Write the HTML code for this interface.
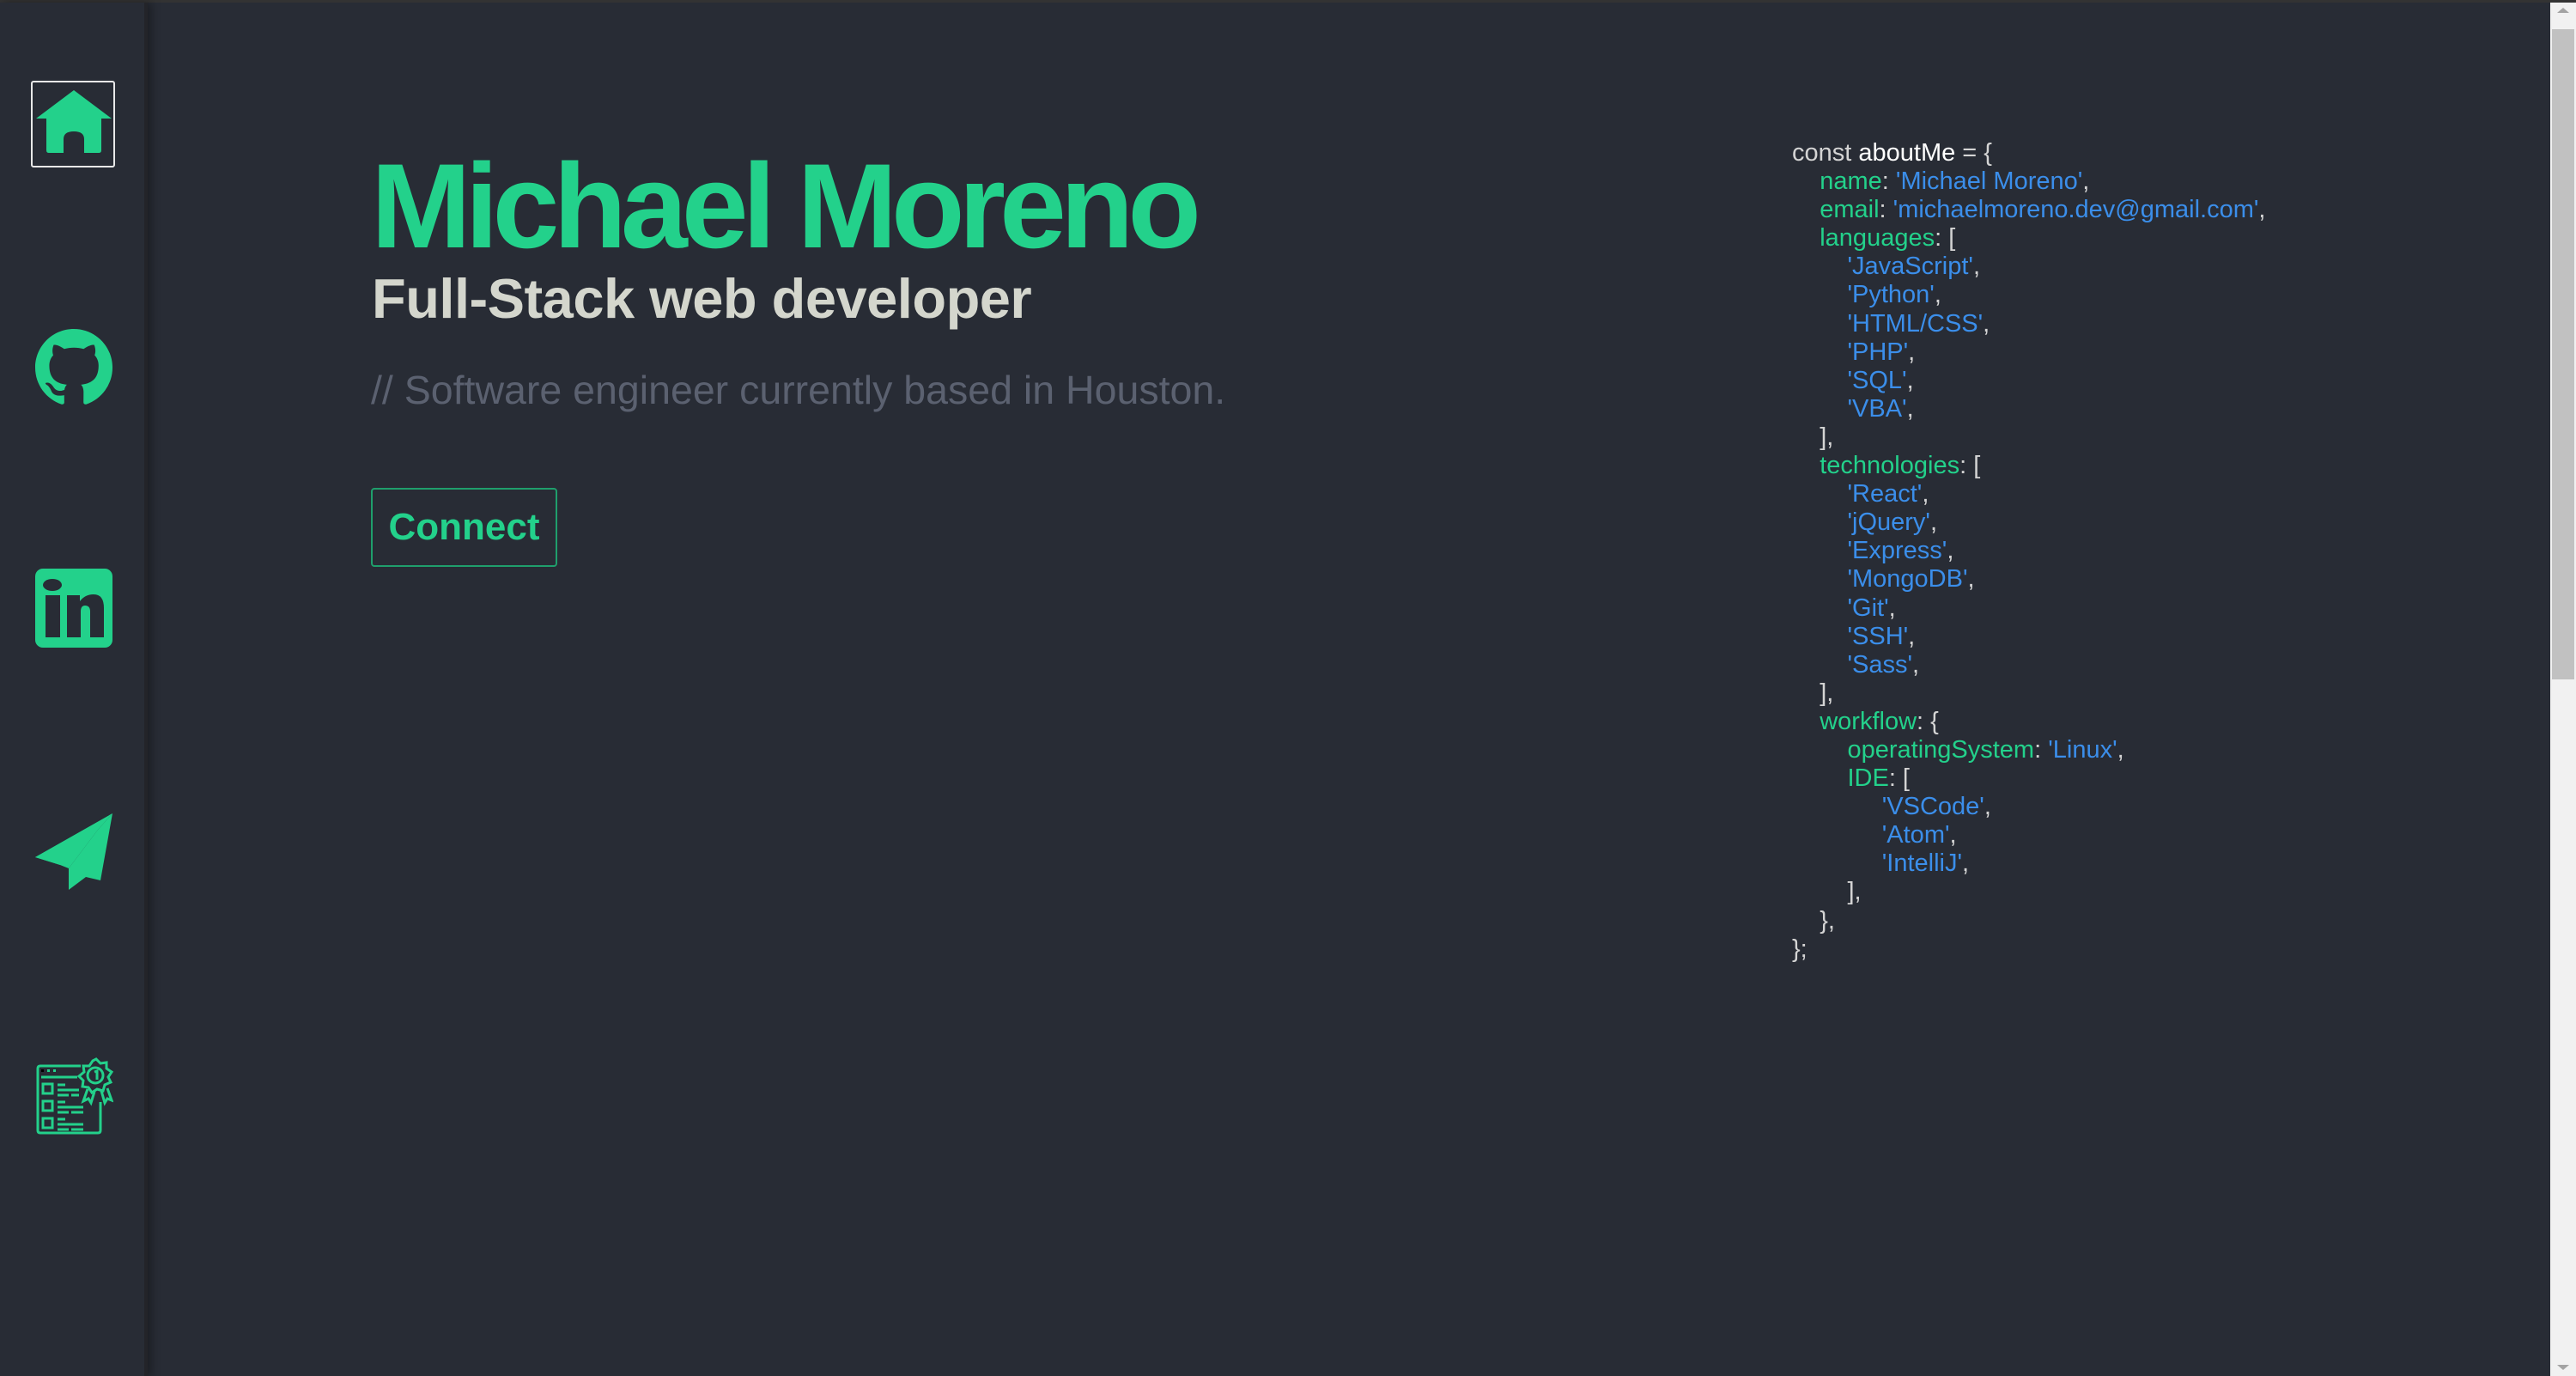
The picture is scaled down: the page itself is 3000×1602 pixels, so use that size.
<!DOCTYPE html>
<html><head><meta charset="utf-8"><style>
*{margin:0;padding:0;box-sizing:border-box}
html,body{width:3000px;height:1602px;overflow:hidden;background:#282c35;font-family:"Liberation Sans",sans-serif}
.top{position:absolute;left:0;top:0;width:3000px;height:3px;background:#333}
.side{position:absolute;left:0;top:3px;width:172px;height:1599px;background:#282c35;box-shadow:4px 0 10px rgba(0,0,0,.35);border-right:4px solid #232429}
.ic{position:absolute}
.home{left:36px;top:94px;width:98px;height:101px;border:2px solid #e8e8e8;border-radius:3px}
h1{position:absolute;left:432px;top:170px;font-size:140px;font-weight:bold;color:#23d18b;letter-spacing:-7px;line-height:140px;white-space:nowrap}
h2{position:absolute;left:433px;top:313px;font-size:65px;font-weight:bold;color:#d4d6cd;line-height:70px;white-space:nowrap;letter-spacing:-.5px}
.cm{position:absolute;left:432px;top:426px;font-size:46.5px;color:#5b6170;line-height:56px;white-space:nowrap}
.btn{position:absolute;left:432px;top:568px;width:217px;height:92px;border:2px solid #1f9f6c;border-radius:4px;color:#23d18b;font-weight:bold;font-size:44px;line-height:88px;text-align:center}
pre{position:absolute;left:2087px;top:162px;font-family:"Liberation Sans",sans-serif;font-size:29px;line-height:33.1px;color:#d4d4d4}
.k{color:#23d18b}.s{color:#3b8eea}.w{color:#fff}
.sb{position:absolute;left:2970px;top:3px;width:30px;height:1599px;background:#f1f1f1}
.th{position:absolute;left:2972px;top:34px;width:26px;height:757px;background:#c1c1c1}
</style></head><body>
<div class="top"></div>
<div class="side"></div>
<div class="ic home"></div>
<svg class="ic" style="left:42px;top:105px" width="88" height="73" viewBox="0 0 88 73"><path d="M0 33 L44 0 L88 33 L76 33 L76 70 Q76 73 73 73 L56 73 L56 57 Q56 48 44 48 Q32 48 32 57 L32 73 L15 73 Q12 73 12 70 L12 33 Z" fill="#23d18b"/></svg>
<svg class="ic" style="left:41px;top:381px" width="90" height="94" viewBox="0 0 16 16"><path fill="#23d18b" d="M8 0C3.58 0 0 3.58 0 8c0 3.54 2.290 6.530 5.470 7.590.4.07.55-.17.55-.38 0-.19-.01-.82-.01-1.49-2.01.37-2.53-.49-2.69-.94-.09-.23-.48-.94-.82-1.130-.28-.15-.68-.52-.01-.53.63-.01 1.080.58 1.230.82.72 1.210 1.870.87 2.330.66.07-.52.28-.87.51-1.07-1.78-.2-3.64-.89-3.64-3.95 0-.87.31-1.59.82-2.15-.08-.2-.36-1.02.08-2.12 0 0 .67-.21 2.2.82.64-.18 1.32-.27 2-.27.68 0 1.36.09 2 .27 1.53-1.04 2.2-.82 2.2-.82.44 1.1.16 1.92.08 2.12.51.56.82 1.27.82 2.15 0 3.07-1.87 3.75-3.65 3.95.29.25.54.73.54 1.48 0 1.07-.01 1.93-.01 2.2 0 .21.15.46.55.38A8.013 8.013 0 0016 8c0-4.42-3.58-8-8-8z"/></svg>
<svg class="ic" style="left:41px;top:662px" width="90" height="92" viewBox="0 0 90 92"><rect x="0" y="0" width="90" height="92" rx="9" fill="#23d18b"/><ellipse cx="20" cy="19" rx="11" ry="7" fill="#282c35"/><rect x="12" y="31" width="17" height="49" fill="#282c35"/><path d="M37 31 H52 V38 Q58 30 68 30 Q80 30 80 46 V80 H64 V50 Q64 43 58 43 Q53 43 53 50 V80 H37 Z" fill="#282c35"/></svg>
<svg class="ic" style="left:0;top:0" width="172" height="1100"><path d="M41 998 L131 947 L70 1007 Z" fill="#23d18b"/><path d="M80 1011 L114 966 L131 947 L117 1025 L100 1021 L80 1036 Z" fill="#23d18b"/><path d="M41 998 L131 947 L114 966 L80 1011 L70 1007 Z" fill="#23d18b"/></svg>
<svg class="ic" style="left:42px;top:1230px" width="90" height="92" viewBox="0 0 90 92" fill="none" stroke="#23d18b" stroke-width="3"><path d="M52 11 H5 Q2 11 2 14 V86 Q2 89 5 89 H72 Q75 89 75 86 V53"/><rect x="6" y="15" width="3" height="3" fill="#000" stroke="none"/><rect x="13" y="15" width="3" height="3" fill="#23d18b" stroke="none"/><rect x="20" y="15" width="3" height="3" fill="#23d18b" stroke="none"/><path d="M6 24 H48"/><rect x="8" y="32" width="11" height="11"/><rect x="8" y="52" width="11" height="11"/><rect x="8" y="72" width="11" height="11"/><path d="M25 33 H34 M25 39 H50 M25 45 H38 M41 45 H50 M25 53 H34 M25 59 H55 M25 65 H38 M41 65 H55 M25 73 H34 M25 79 H55 M25 85 H38 M41 85 H55"/><path d="M70 3 L75 8 L82 7 L82 14 L88 18 L84 24 L87 30 L80 33 L78 40 L71 38 L65 42 L61 36 L54 35 L55 28 L50 23 L56 18 L55 11 L62 11 L66 5 Z"/><circle cx="69" cy="22" r="9"/><path d="M68 18 L71 17 V27"/><path d="M60 38 L55 52 L61 49 L64 54 L68 41 M76 40 L80 54 L83 49 L88 51 L83 37"/></svg>
<h1>Michael Moreno</h1>
<h2>Full-Stack web developer</h2>
<div class="cm">// Software engineer currently based in Houston.</div>
<div class="btn">Connect</div>
<pre>const <span class="w">aboutMe</span> = {
    <span class="k">name</span>: <span class="s">'Michael Moreno'</span>,
    <span class="k">email</span>: <span class="s">'michaelmoreno.dev@gmail.com'</span>,
    <span class="k">languages</span>: [
        <span class="s">'JavaScript'</span>,
        <span class="s">'Python'</span>,
        <span class="s">'HTML/CSS'</span>,
        <span class="s">'PHP'</span>,
        <span class="s">'SQL'</span>,
        <span class="s">'VBA'</span>,
    ],
    <span class="k">technologies</span>: [
        <span class="s">'React'</span>,
        <span class="s">'jQuery'</span>,
        <span class="s">'Express'</span>,
        <span class="s">'MongoDB'</span>,
        <span class="s">'Git'</span>,
        <span class="s">'SSH'</span>,
        <span class="s">'Sass'</span>,
    ],
    <span class="k">workflow</span>: {
        <span class="k">operatingSystem</span>: <span class="s">'Linux'</span>,
        <span class="k">IDE</span>: [
             <span class="s">'VSCode'</span>,
             <span class="s">'Atom'</span>,
             <span class="s">'IntelliJ'</span>,
        ],
    },
};</pre>
<div class="sb"></div>
<div class="th"></div>
<svg class="ic" style="left:2978px;top:9px" width="14" height="6"><path d="M0 6 L7 0 L14 6Z" fill="#a3a3a3"/></svg>
<svg class="ic" style="left:2978px;top:1589px" width="14" height="6"><path d="M0 0 L7 6 L14 0Z" fill="#a3a3a3"/></svg>
</body></html>
